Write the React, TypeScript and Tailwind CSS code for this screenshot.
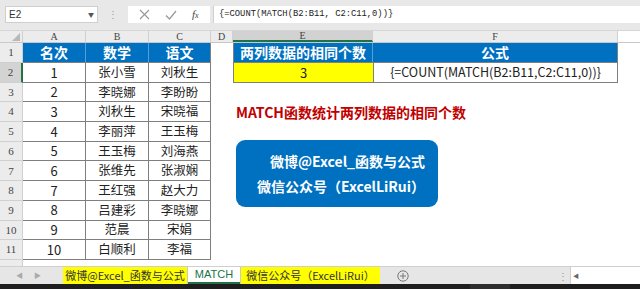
import React from "react";

const cjk = { fontFamily: '"Noto Sans CJK SC", "Noto Sans", sans-serif' };

const rows = [
  ["1", "张小雪", "刘秋生"],
  ["2", "李晓娜", "李盼盼"],
  ["3", "刘秋生", "宋晓福"],
  ["4", "李丽萍", "王玉梅"],
  ["5", "王玉梅", "刘海燕"],
  ["6", "张维先", "张淑娴"],
  ["7", "王红强", "赵大力"],
  ["8", "吕建彩", "李晓娜"],
  ["9", "范晨", "宋娟"],
  ["10", "白顺利", "李福"],
];

function RowHead({ n, active }: { n: number; active?: boolean }) {
  return (
    <div
      className={`w-[23px] shrink-0 flex items-center justify-center border-r border-b border-[#d0d0d0] text-[11px] text-[#444] ${
        active ? "bg-[#d3d3d3] border-r-2 border-r-[#217346]" : "bg-[#ececec]"
      }`}
      style={{ fontFamily: '"Liberation Serif", serif' }}
    >
      {n}
    </div>
  );
}

export default function App() {
  return (
    <div className="w-[640px] h-[289px] overflow-hidden bg-white flex flex-col" style={cjk}>
      {/* formula bar */}
      <div className="h-[31px] shrink-0 bg-[#e8e8e8] flex items-start pt-[6px] border-b border-[#d6d6d6]">
        <div className="ml-[5px] w-[93px] h-[17px] bg-white border border-[#cfcfcf] flex items-center justify-between px-[3px]">
          <span className="text-[10px] text-[#333]" style={{ fontFamily: '"Liberation Sans", sans-serif' }}>E2</span>
          <span className="text-[6px] text-[#555]">▼</span>
        </div>
        <span className="ml-[10px] mt-[1px] text-[10px] text-[#999] leading-[14px]">⋮</span>
        <div className="ml-[10px] w-[82px] h-[17px] bg-white flex items-center justify-around px-[4px]">
          <svg width="11" height="11" viewBox="0 0 11 11">
            <path d="M1 1L10 10M10 1L1 10" stroke="#9a9a9a" strokeWidth="1.2" />
          </svg>
          <svg width="12" height="10" viewBox="0 0 12 10">
            <path d="M1 5.5L4.5 9L11 1" stroke="#9a9a9a" strokeWidth="1.3" fill="none" />
          </svg>
          <span className="text-[11px] italic text-[#444]" style={{ fontFamily: '"Liberation Serif", serif' }}>
            f<span className="text-[8px]">x</span>
          </span>
        </div>
        <div className="ml-[3px] flex-1 h-[17px] bg-white border-l border-[#d0d0d0] flex items-center pl-[5px]">
          <span className="text-[8.8px] text-[#222]" style={{ fontFamily: '"Liberation Mono", monospace' }}>
            {"{=COUNT(MATCH(B2:B11, C2:C11,0))}"}
          </span>
        </div>
      </div>

      {/* sheet */}
      <div className="relative flex-1 flex flex-col">
        {/* column headers */}
        <div className="h-[12px] shrink-0 flex text-[10px] text-[#444] bg-[#ececec] border-b border-[#c8c8c8]" style={{ fontFamily: '"Liberation Serif", serif' }}>
          <div className="w-[23px] shrink-0 border-r border-[#d0d0d0] flex items-end justify-end pr-[2px] pb-[1px]">
            <svg width="8" height="8" viewBox="0 0 8 8"><path d="M8 0V8H0Z" fill="#b8b8b8" /></svg>
          </div>
          <div className="w-[63px] shrink-0 border-r border-[#d0d0d0] flex items-center justify-center leading-none">A</div>
          <div className="w-[63px] shrink-0 border-r border-[#d0d0d0] flex items-center justify-center leading-none">B</div>
          <div className="w-[62px] shrink-0 border-r border-[#d0d0d0] flex items-center justify-center leading-none">C</div>
          <div className="w-[22px] shrink-0 border-r border-[#d0d0d0] flex items-center justify-center leading-none">D</div>
          <div className="w-[140px] shrink-0 border-r border-[#d0d0d0] bg-[#d2d2d2] border-b-2 border-b-[#217346] flex items-center justify-center leading-none">E</div>
          <div className="w-[245px] shrink-0 border-r border-[#d0d0d0] flex items-center justify-center leading-none">F</div>
          <div className="flex-1 bg-white" />
        </div>

        {/* row 1 */}
        <div className="h-[20px] shrink-0 flex">
          <RowHead n={1} />
          {["名次", "数学", "语文"].map((t, i) => (
            <div
              key={t}
              className={`${i === 2 ? "w-[62px] border-r-[#7f7f7f]" : "w-[63px] border-r-[#5a9bd5]"} shrink-0 bg-[#0070c0] border-r border-b border-b-[#7f7f7f] flex items-center justify-center text-white font-bold text-[14px]`}
            >
              {t}
            </div>
          ))}
          <div className="w-[22px] shrink-0" />
          <div className="w-[140px] shrink-0 bg-[#0070c0] border-l border-r border-b border-l-[#7f7f7f] border-r-[#5a9bd5] border-b-[#7f7f7f] flex items-center justify-center text-white font-bold text-[14px] whitespace-nowrap">
            两列数据的相同个数
          </div>
          <div className="w-[245px] shrink-0 bg-[#0070c0] border-r border-b border-[#7f7f7f] flex items-center justify-center text-white font-bold text-[14px]">
            公式
          </div>
          <div className="flex-1" />
        </div>

        {/* rows 2-11 */}
        {rows.map((r, idx) => (
          <div key={idx} className="h-[19.7px] shrink-0 flex">
            <RowHead n={idx + 2} active={idx === 0} />
            <div className="w-[63px] shrink-0 border-r border-b border-[#7f7f7f] flex items-center justify-center text-[13px] text-[#222]">{r[0]}</div>
            <div className="w-[63px] shrink-0 border-r border-b border-[#7f7f7f] flex items-center justify-center text-[12.5px] text-[#222]">{r[1]}</div>
            <div className="w-[62px] shrink-0 border-r border-b border-[#7f7f7f] flex items-center justify-center text-[12.5px] text-[#222]">{r[2]}</div>
            <div className="w-[22px] shrink-0" />
            {idx === 0 ? (
              <>
                <div className="w-[140px] shrink-0 bg-[#ffff00] border-l border-b border-[#7f7f7f] flex items-center justify-center text-[13px] text-[#222]">
                  3
                </div>
                <div className="w-[245px] shrink-0 border-l border-r border-b border-[#7f7f7f] flex items-center justify-center text-[12.5px] text-[#222] whitespace-nowrap">
                  {"{=COUNT(MATCH(B2:B11,C2:C11,0))}"}
                </div>
              </>
            ) : idx === 2 ? (
              <div className="w-[140px] shrink-0 flex items-center pl-[3px] whitespace-nowrap text-[14px] font-bold text-[#c00000]">
                MATCH函数统计两列数据的相同个数
              </div>
            ) : null}
            <div className="flex-1" />
          </div>
        ))}

        <div className="flex-1 flex">
          <div className="w-[23px] bg-[#ececec] border-r border-[#d0d0d0]" />
        </div>

        {/* text box shape */}
        <div className="absolute left-[236px] top-[109px] w-[202px] h-[67px] rounded-[9px] bg-[#0070c0] flex flex-col items-end justify-center pr-[13px] gap-[5px] text-white font-bold text-[14px] leading-[20px]">
          <span>微博@Excel_函数与公式</span>
          <span>微信公众号（ExcelLiRui）</span>
        </div>
      </div>

      {/* sheet tabs */}
      <div className="h-[18px] shrink-0 bg-[#e6e6e6] border-t border-[#cfcfcf] flex items-stretch text-[11px]">
        <div className="w-[63px] shrink-0 flex items-center gap-[11px] pl-[16px] text-[7px] text-[#aaa]">
          <span>◀</span>
          <span>▶</span>
        </div>
        <div className="w-[125px] shrink-0 bg-[#ffff00] flex items-center justify-center text-[#333] border-r border-[#c8c8c8]">
          微博@Excel_函数与公式
        </div>
        <div className="w-[52px] shrink-0 bg-white flex items-center justify-center text-[#217346] border-b-2 border-[#217346]" style={{ fontFamily: '"Liberation Sans", sans-serif' }}>
          MATCH
        </div>
        <div className="w-[140px] shrink-0 bg-[#ffff00] flex items-center justify-center text-[#333] border-l border-[#c8c8c8]">
          微信公众号（ExcelLiRui）
        </div>
        <div className="w-[45px] shrink-0 flex items-center justify-center">
          <svg width="12" height="12" viewBox="0 0 12 12">
            <circle cx="6" cy="6" r="5.2" stroke="#777" strokeWidth="1" fill="none" />
            <path d="M6 3V9M3 6H9" stroke="#777" strokeWidth="1" />
          </svg>
        </div>
        <div className="flex-1" />
        <div className="w-[10px] flex items-center justify-center text-[10px] text-[#999]">⋮</div>
        <div className="w-[70px] ml-[2px] bg-white border-l border-[#cfcfcf] flex items-center pl-[2px] text-[6px] text-[#666]">◀</div>
      </div>

      <div className="h-[5px] shrink-0 bg-[#1e1e1e] flex">
        <div className="ml-[470px] w-[40px] bg-[#2e2e2e]" />
      </div>
    </div>
  );
}
